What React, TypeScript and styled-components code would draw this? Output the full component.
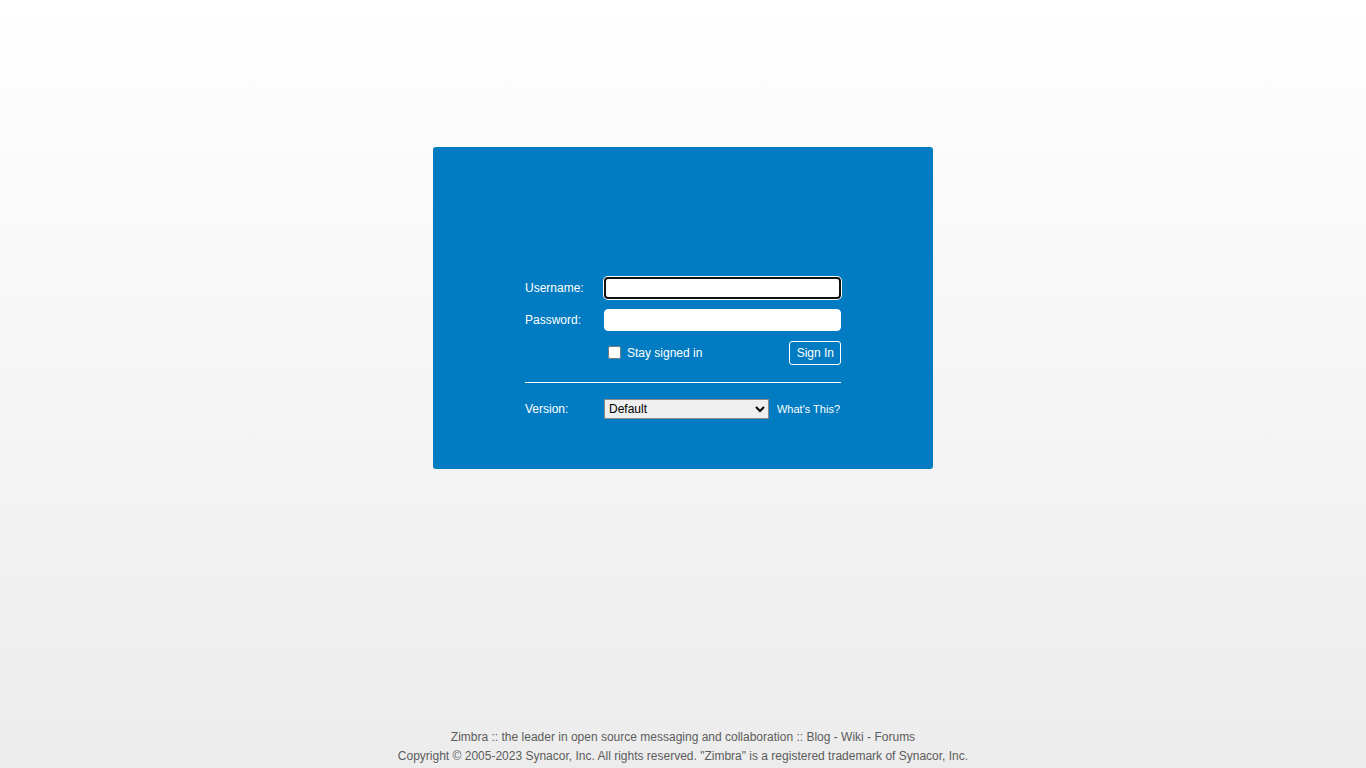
import styled, { createGlobalStyle } from "styled-components";

const GlobalStyle = createGlobalStyle`
  html, body {
    margin: 0;
    padding: 0;
  }

  body {
    font-family: "Liberation Sans", Arial, sans-serif;
    background: linear-gradient(#ffffff, #ececec);
    min-height: 100vh;
  }
`;

const Page = styled.div`
  display: flex;
  flex-direction: column;
  align-items: center;
  min-height: 100vh;
  box-sizing: border-box;
`;

const Panel = styled.div`
  width: 500px;
  margin-top: 147px;
  box-sizing: border-box;
  padding: 130px 92px 50px;
  background-color: #017bc1;
  border-radius: 3px;
  color: #ffffff;
  font-size: 12px;
`;

const Row = styled.div`
  display: flex;
  align-items: center;
  margin-bottom: 10px;
`;

const Label = styled.label`
  width: 79px;
  flex-shrink: 0;
  color: #ffffff;
  font-size: 12px;
`;

const TextInput = styled.input<{ focused?: boolean }>`
  width: 237px;
  height: 22px;
  box-sizing: border-box;
  border: ${({ focused }) => (focused ? "2px solid #111111" : "1px solid #ffffff")};
  box-shadow: ${({ focused }) => (focused ? "0 0 0 1px #ffffff" : "none")};
  border-radius: 4px;
  background: #ffffff;
  outline: none;
  font-family: inherit;
  font-size: 12px;
  padding: 0 4px;
  margin: 0;
`;

const ActionRow = styled.div`
  display: flex;
  align-items: center;
  justify-content: space-between;
  padding-left: 79px;
  height: 24px;
`;

const Remember = styled.label`
  display: flex;
  align-items: center;
  gap: 6px;
  font-size: 12px;

  input {
    width: 13px;
    height: 13px;
    margin: 0 0 0 4px;
    position: relative;
    top: -1px;
  }
`;

const SignInButton = styled.button`
  height: 24px;
  padding: 0 6px 0 7px;
  background: transparent;
  border: 1px solid #ffffff;
  border-radius: 3px;
  color: #ffffff;
  font-family: inherit;
  font-size: 12px;
  cursor: pointer;
`;

const Divider = styled.hr`
  border: none;
  border-top: 1px solid #ffffff;
  margin: 17px 0 16px;
`;

const VersionRow = styled.div`
  display: flex;
  align-items: center;
`;

const VersionSelect = styled.select`
  width: 165px;
  height: 20px;
  font-family: inherit;
  font-size: 12px;
  color: #000000;
  background: #efefef;
  border: 1px solid #8a8a8a;
  border-radius: 0;
  margin: 0;
`;

const HelpLink = styled.a`
  margin-left: auto;
  color: #ffffff;
  font-size: 11px;
  text-decoration: none;
  padding-right: 1px;
`;

const Footer = styled.div`
  margin-top: auto;
  padding-bottom: 2px;
  text-align: center;
  color: #5c5c5c;
  font-size: 12px;
  line-height: 19px;

  a {
    color: #5c5c5c;
    text-decoration: none;
  }
`;

export default function App() {
  return (
    <>
      <GlobalStyle />
      <Page>
        <Panel>
          <Row>
            <Label htmlFor="username">Username:</Label>
            <TextInput id="username" type="text" focused />
          </Row>
          <Row>
            <Label htmlFor="password">Password:</Label>
            <TextInput id="password" type="password" />
          </Row>
          <ActionRow>
            <Remember>
              <input type="checkbox" />
              Stay signed in
            </Remember>
            <SignInButton type="button">Sign In</SignInButton>
          </ActionRow>
          <Divider />
          <VersionRow>
            <Label htmlFor="version">Version:</Label>
            <VersionSelect id="version" defaultValue="default">
              <option value="default">Default</option>
              <option value="advanced">Advanced (Ajax)</option>
              <option value="standard">Standard (HTML)</option>
            </VersionSelect>
            <HelpLink href="#">What's This?</HelpLink>
          </VersionRow>
        </Panel>
        <Footer>
          <div>
            <a href="#">Zimbra</a> :: the leader in open source messaging and collaboration ::{" "}
            <a href="#">Blog</a> - <a href="#">Wiki</a> - <a href="#">Forums</a>
          </div>
          <div>
            Copyright © 2005-2023 Synacor, Inc. All rights reserved. "Zimbra" is a registered trademark of Synacor, Inc.
          </div>
        </Footer>
      </Page>
    </>
  );
}
